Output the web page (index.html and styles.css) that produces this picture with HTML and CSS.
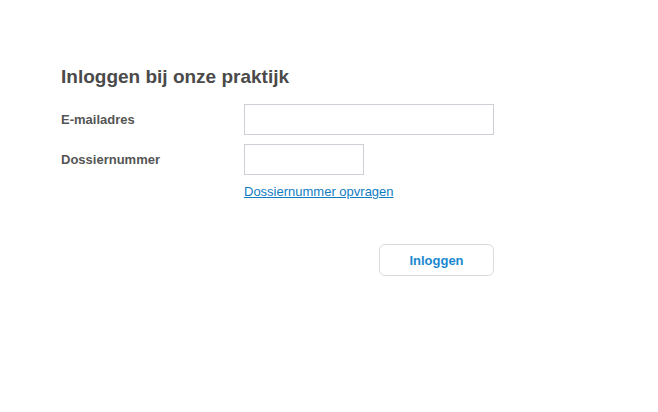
FILE: index.html
```html
<!DOCTYPE html>
<html lang="nl">
<head>
    <meta charset="UTF-8">
    <title>Inloggen</title>
    <link rel="stylesheet" href="styles.css">
</head>
<body>
    <section class="login">
        <h1>Inloggen bij onze praktijk</h1>
        <form class="form">
            <div class="row">
                <label for="email">E-mailadres</label>
                <input id="email" class="field wide" type="text">
            </div>
            <div class="row">
                <label for="dossier">Dossiernummer</label>
                <div class="stack">
                    <input id="dossier" class="field short" type="text">
                    <a href="#" class="request">Dossiernummer opvragen</a>
                </div>
            </div>
            <div class="actions">
                <button type="button" class="btn">Inloggen</button>
            </div>
        </form>
    </section>
</body>
</html>
```

FILE: styles.css
```css
body {
    margin: 0;
    font-family: "Liberation Sans", Arial, sans-serif;
    background-color: #fff;
    color: #555;
}
.login {
    padding: 66px 0 0 61px;
    width: 433px;
}
.login h1 {
    margin: 0 0 16px;
    font-size: 19px;
    font-weight: bold;
    color: #4a4a4a;
}
.row {
    display: flex;
    align-items: flex-start;
    margin-bottom: 9px;
}
.row label {
    width: 183px;
    line-height: 31px;
    font-size: 13px;
    font-weight: bold;
    color: #555;
}
.field {
    box-sizing: border-box;
    height: 31px;
    margin: 0;
    border: 1px solid #ccd0d6;
    border-radius: 0;
    padding: 0 6px;
    font-family: inherit;
}
.wide {
    width: 250px;
}
.short {
    width: 120px;
}
.stack {
    display: flex;
    flex-direction: column;
    align-items: flex-start;
}
.request {
    margin-top: 9px;
    font-size: 13px;
    color: #0f7cc2;
}
.actions {
    display: flex;
    justify-content: flex-end;
    margin-top: 45px;
}
.btn {
    width: 115px;
    height: 32px;
    border: 1px solid #d8dbe0;
    border-radius: 6px;
    background-color: #fff;
    font-family: inherit;
    font-size: 13px;
    font-weight: bold;
    color: #1a88d0;
}
```
